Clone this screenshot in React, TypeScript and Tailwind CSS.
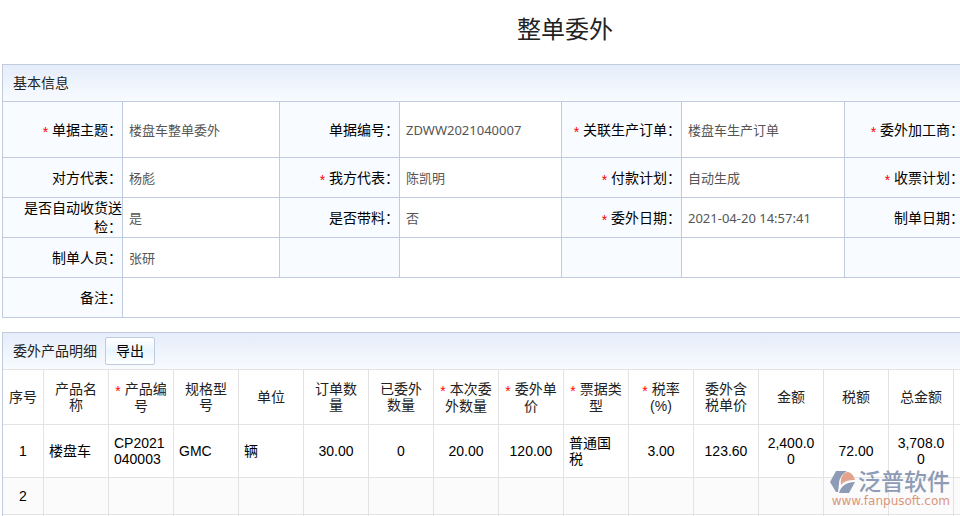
import type { ReactNode } from "react";

type Field = { label: string; value: string; required?: boolean };

const fieldRows: { tall?: boolean; fields: Field[] }[] = [
  {
    tall: true,
    fields: [
      { label: "单据主题", value: "楼盘车整单委外", required: true },
      { label: "单据编号", value: "ZDWW2021040007" },
      { label: "关联生产订单", value: "楼盘车生产订单", required: true },
      { label: "委外加工商", value: "", required: true },
    ],
  },
  {
    fields: [
      { label: "对方代表", value: "杨彪" },
      { label: "我方代表", value: "陈凯明", required: true },
      { label: "付款计划", value: "自动生成", required: true },
      { label: "收票计划", value: "", required: true },
    ],
  },
  {
    fields: [
      { label: "是否自动收货送检", value: "是" },
      { label: "是否带料", value: "否" },
      { label: "委外日期", value: "2021-04-20 14:57:41", required: true },
      { label: "制单日期", value: "" },
    ],
  },
  {
    fields: [
      { label: "制单人员", value: "张研" },
      { label: "", value: "" },
      { label: "", value: "" },
      { label: "", value: "" },
    ],
  },
];

type Column = { title: string; required?: boolean; left?: boolean; value: string };

const columns: Column[] = [
  { title: "产品名称", value: "楼盘车", left: true },
  { title: "产品编号", value: "CP2021040003", left: true, required: true },
  { title: "规格型号", value: "GMC", left: true },
  { title: "单位", value: "辆", left: true },
  { title: "订单数量", value: "30.00" },
  { title: "已委外数量", value: "0" },
  { title: "本次委外数量", value: "20.00", required: true },
  { title: "委外单价", value: "120.00", required: true },
  { title: "票据类型", value: "普通国税", left: true, required: true },
  { title: "税率(%)", value: "3.00", required: true },
  { title: "委外含税单价", value: "123.60" },
  { title: "金额", value: "2,400.00" },
  { title: "税额", value: "72.00" },
  { title: "总金额", value: "3,708.00" },
];

function Star() {
  return <span className="align-[-2px] text-sm leading-none text-[#ff0000]">* </span>;
}

function PanelHeader({ title, children }: { title: string; children?: ReactNode }) {
  return (
    <div className="flex h-9 items-center gap-2 bg-linear-to-b from-[#e5edfa] to-[#f8fbff] pl-[10px]">
      <h2 className="text-sm text-[#222222]">{title}</h2>
      {children}
    </div>
  );
}

function BasicInfo() {
  return (
    <section className="border-l border-t border-[#c0cbde]">
      <PanelHeader title="基本信息" />
      <table className="w-full table-fixed border-separate border-spacing-0 border-t border-[#c0cbde]">
        <colgroup>
          <col className="w-[120px]" />
          <col className="w-[157px]" />
          <col className="w-[120px]" />
          <col className="w-[162px]" />
          <col className="w-[120px]" />
          <col className="w-[163px]" />
          <col className="w-[120px]" />
          <col />
        </colgroup>
        <tbody>
          {fieldRows.map((row, r) => (
            <tr key={r} className={row.tall ? "h-14" : "h-10"}>
              {row.fields.map((field, i) => (
                <FieldCells key={i} field={field} />
              ))}
            </tr>
          ))}
          <tr className="h-10">
            <FieldCells field={{ label: "备注", value: "" }} span={7} />
          </tr>
        </tbody>
      </table>
    </section>
  );
}

function FieldCells({ field, span }: { field: Field; span?: number }) {
  return (
    <>
      <th
        scope="row"
        className="border-b border-r border-[#c0cbde] bg-[#f8fbff] p-0 pt-px text-right text-sm leading-[19px] font-normal text-black"
      >
        {field.required && <Star />}
        {field.label && field.label + "："}
      </th>
      <td
        colSpan={span}
        className="border-b border-r border-[#c0cbde] p-0 pt-px pl-[6px] font-['Noto_Sans','Noto_Sans_CJK_SC',sans-serif] text-[13px] leading-[19px] text-[#555555]"
      >
        {field.value}
      </td>
    </>
  );
}

function ProductDetails() {
  const cell = "border-b border-r border-[#e3e3e3] px-[5px] py-0 break-all";
  return (
    <section className="border-l border-t border-[#c0cbde]">
      <PanelHeader title="委外产品明细">
        <button
          type="button"
          className="h-7 w-[50px] rounded-[2px] border border-[#c0ccdd] bg-linear-to-b from-white via-[#e9f5ff] to-white text-sm text-black"
        >
          导出
        </button>
      </PanelHeader>
      <table className="w-full table-fixed border-separate border-spacing-0 border-t border-[#e3e3e3] text-sm leading-4">
        <colgroup>
          <col className="w-[41px]" />
          {columns.map((column) => (
            <col key={column.title} className="w-[65px]" />
          ))}
          <col />
        </colgroup>
        <thead>
          <tr className="h-[55px] text-[#222222]">
            <th scope="col" className={cell + " font-normal"}>
              序号
            </th>
            {columns.map((column) => (
              <th key={column.title} scope="col" className={cell + " font-normal"}>
                {column.required && <Star />}
                {column.title}
              </th>
            ))}
            <td className={cell} />
          </tr>
        </thead>
        <tbody className="text-black">
          <tr className="h-[53px]">
            <td className={cell + " text-center"}>1</td>
            {columns.map((column) => (
              <td key={column.title} className={cell + (column.left ? " text-left" : " text-center")}>
                {column.value}
              </td>
            ))}
            <td className={cell} />
          </tr>
          <tr className="h-[37px] bg-[#fbfbfb]">
            <td className={cell + " text-center"}>2</td>
            {columns.map((column) => (
              <td key={column.title} className={cell} />
            ))}
            <td className={cell} />
          </tr>
          <tr className="h-[37px]">
            <td className={cell} />
            {columns.map((column) => (
              <td key={column.title} className={cell} />
            ))}
            <td className={cell} />
          </tr>
        </tbody>
      </table>
    </section>
  );
}

function Watermark() {
  return (
    <div className="pointer-events-none absolute right-[10px] bottom-[8px] flex flex-col items-end">
      <div className="flex items-center gap-[2px]">
        <svg className="h-6 w-[26px]" viewBox="0 0 26 24" aria-hidden="true">
          <path d="M6 1H17C12 4 9 9 9 14L8 22H6L0 12Z" fill="#8e9bb7" />
          <path d="M11 15C10 8 13 2 18 2C22 3 24 6 25 10C19 10 14 11 11 15Z" fill="#e2a48c" />
          <path d="M9 23C11 16 16 12 25 12L19 23Z" fill="#8e9bb7" />
        </svg>
        <span className="text-[23px] leading-6 font-medium text-[#8e9bb7]">泛普软件</span>
      </div>
      <span className="font-['DejaVu_Sans',sans-serif] text-xs leading-[14px] text-[#dc957a]">www.fanpusoft.com</span>
    </div>
  );
}

export default function App() {
  return (
    <div className="relative h-screen w-full overflow-hidden bg-white font-['Liberation_Sans','Noto_Sans_CJK_SC',sans-serif]">
      <main className="flex min-w-[1130px] flex-col px-[2px]">
        <h1 className="pt-3 pb-4 text-center text-2xl leading-9 text-[#222222]">整单委外</h1>
        <div className="flex flex-col gap-[14px]">
          <BasicInfo />
          <ProductDetails />
        </div>
      </main>
      <Watermark />
    </div>
  );
}
